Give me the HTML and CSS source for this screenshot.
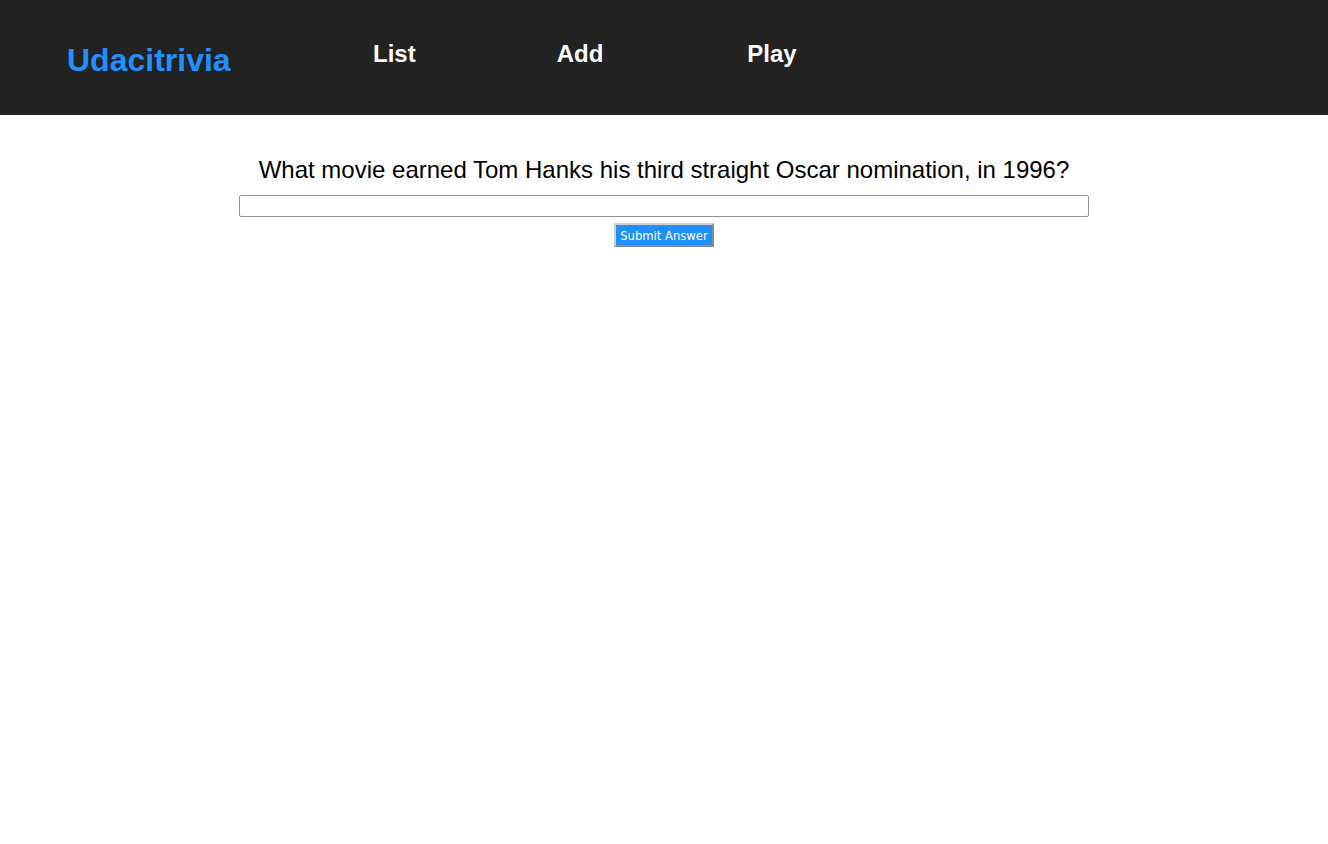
FILE: index.html
```html
<!DOCTYPE html>
<html>
<head>
<meta charset="utf-8">
<title>Udacitrivia</title>
<link rel="stylesheet" href="styles.css">
</head>
<body>
<header class="header">
  <h1 class="logo">Udacitrivia</h1>
  <nav class="nav">
    <h2 class="nav-item">List</h2>
    <h2 class="nav-item">Add</h2>
    <h2 class="nav-item">Play</h2>
  </nav>
</header>
<main class="quiz">
  <div class="question">What movie earned Tom Hanks his third straight Oscar nomination, in 1996?</div>
  <form class="answer-form">
    <input class="answer-input" type="text">
    <button class="submit-btn" type="button">Submit Answer</button>
  </form>
</main>
</body>
</html>
```
FILE: styles.css
```css
html, body {
  margin: 0;
  padding: 0;
  background: #fff;
  font-family: "Liberation Sans", Arial, sans-serif;
}
.header {
  height: 115px;
  background: #222222;
  display: flex;
  align-items: flex-start;
  box-sizing: border-box;
  padding: 40px 0 0 67px;
}
.logo {
  margin: 2px 0 0 0;
  font-size: 32px;
  font-weight: bold;
  color: #1e90ff;
  width: 306px;
}
.nav {
  display: flex;
  gap: 141px;
}
.nav-item {
  margin: 0;
  font-size: 24px;
  font-weight: bold;
  color: #fff;
}
.nav-item + .nav-item + .nav-item {
  margin-left: 3px;
}
.quiz {
  display: flex;
  flex-direction: column;
  align-items: center;
  padding-top: 41px;
}
.question {
  font-size: 24px;
  color: #000;
  line-height: 28px;
}
.answer-form {
  display: flex;
  flex-direction: column;
  align-items: center;
  margin-top: 11px;
}
.answer-input {
  width: 850px;
  height: 22px;
  box-sizing: border-box;
  border: 1px solid #8f8f9d;
  border-radius: 2px;
  margin: 0;
  padding: 0 4px;
}
.submit-btn {
  margin-top: 6px;
  width: 100px;
  height: 24px;
  box-sizing: border-box;
  background: #1e90ff;
  color: #fff;
  font-family: "DejaVu Sans", Verdana, sans-serif;
  font-size: 11.6px;
  padding: 1px 0 0 0;
  border: 2px solid;
  border-color: #d0d0d0 #8a8a8a #8a8a8a #d0d0d0;
}
```
